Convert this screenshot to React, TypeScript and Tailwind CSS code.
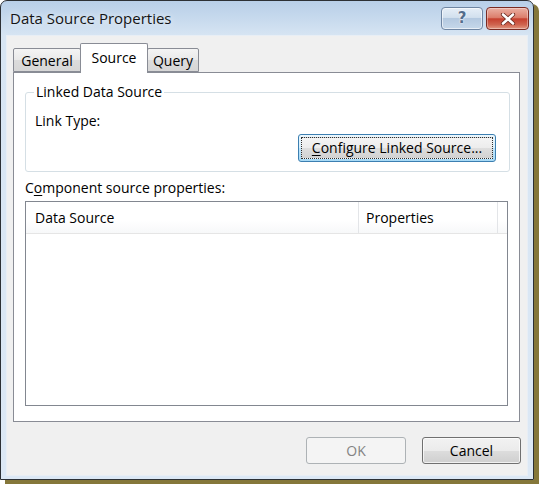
import React from "react";

const font = "font-['Open_Sans',_'Noto_Sans',_sans-serif]";

function TitleButtons() {
  return (
    <div className="flex gap-[3px] self-start mt-[6px]">
      <div className="w-[42px] h-[23px] rounded-[4px] border border-[#6f86a3] bg-[linear-gradient(to_bottom,#e6eef7_0%,#d2e0ee_45%,#b4c9e0_50%,#c6d8ea_100%)] flex items-center justify-center shadow-[inset_0_0_0_1px_rgba(255,255,255,0.6)]">
        <span className="text-[15px] leading-none font-bold text-[#536d8c] [text-shadow:0_0_2px_#fff,0_0_1px_#fff] font-['DejaVu_Sans',sans-serif]">?</span>
      </div>
      <div className="w-[43px] h-[23px] rounded-[4px] border border-[#7a2a22] bg-[linear-gradient(to_bottom,#eab0a3_0%,#dc7f6d_45%,#c6402f_52%,#d06550_80%,#e39a84_100%)] flex items-center justify-center shadow-[inset_0_0_0_1px_rgba(255,255,255,0.35)]">
        <svg width="16" height="12" viewBox="0 0 16 12">
          <path d="M3 1.5 L13 10.5 M13 1.5 L3 10.5" stroke="#6b2a20" strokeWidth="4.2" strokeLinecap="round" />
          <path d="M3 1.5 L13 10.5 M13 1.5 L3 10.5" stroke="#ffffff" strokeWidth="2.6" strokeLinecap="round" />
        </svg>
      </div>
    </div>
  );
}

function Tab({ label, selected, w }: { label: string; selected?: boolean; w: string }) {
  if (selected) {
    return (
      <div
        className={`${w} h-[30px] -mb-px relative z-10 bg-white border border-b-0 border-[#898c95] rounded-t-[2px] flex items-center justify-center text-[14px] text-black pb-[2px]`}
      >
        {label}
      </div>
    );
  }
  return (
    <div
      className={`${w} h-[24px] bg-[linear-gradient(to_bottom,#f4f4f4_0%,#e9e9e9_50%,#dcdcdc_51%,#d6d6d6_100%)] border border-[#898c95] rounded-t-[2px] flex items-center justify-center text-[14px] text-black`}
    >
      {label}
    </div>
  );
}

export default function App() {
  return (
    <div className={`w-[539px] h-[484px] bg-white ${font}`}>
      <div className="w-[534px] h-[480px] flex flex-col border border-[#2c3035] rounded-t-[7px] bg-[linear-gradient(to_bottom,#b8cfe8_0px,#c9dbee_20px,#d7e5f3_35px,#dce8f5_100%)] shadow-[5px_4px_0_0_#85773a]">
        {/* Title bar */}
        <div className="h-[35px] flex items-start pl-[9px] pr-[4px]">
          <div className="text-[15px] leading-[20px] mt-[7px] text-[#141414] [text-shadow:0_0_6px_rgba(255,255,255,0.9)]">
            Data Source Properties
          </div>
          <div className="flex-1" />
          <TitleButtons />
        </div>

        {/* Client */}
        <div className="flex-1 mx-[6px] mb-[4px] bg-[#f0f0f0] flex flex-col pl-[6px] pr-[6px] pt-[7px] shadow-[0_0_0_1px_#e8eef5]">
          {/* Tabs */}
          <div className="h-[29px] flex items-end">
            <Tab label="General" w="w-[68px]" />
            <Tab label="Source" selected w="w-[68px] -ml-px" />
            <Tab label="Query" w="w-[52px] -ml-px" />
          </div>

          {/* Panel */}
          <div className="w-[507px] h-[350px] bg-white border border-[#898c95] pl-[11px] pt-[9px] flex flex-col">
            <fieldset className="w-[485px] h-[90px] border border-[#d5dfe5] rounded-[3px] pl-[8px] pr-[13px] flex flex-col">
              <legend className="px-[2px] text-[14px] leading-[20px] text-black">Linked Data Source</legend>
              <div className="pl-[1px] text-[14px] leading-[20px] mt-[9px] text-black">Link Type:</div>
              <div className="flex justify-end mt-[3px]">
                <div className="w-[198px] h-[28px] rounded-[3px] border border-[#3c7fb1] bg-[linear-gradient(to_bottom,#eaf6fd_0%,#d9f0fc_50%,#bee6fd_51%,#a7d9f5_100%)] p-[2px]">
                  <div className="w-full h-full border border-dotted border-[#303030] bg-[linear-gradient(to_bottom,#f4f4f4_0%,#ececec_50%,#dedede_51%,#d2d2d2_100%)] flex items-center justify-center text-[14px] text-black leading-none">
                    <span>
                      <span className="underline underline-offset-2">C</span>onfigure Linked Source...
                    </span>
                  </div>
                </div>
              </div>
            </fieldset>

            <div className="text-[14px] leading-[20px] mt-[6px] text-black">
              C<span className="underline underline-offset-2">o</span>mponent source properties:
            </div>

            <div className="w-[483px] h-[205px] mt-[3px] border border-[#828790] bg-white flex flex-col">
              <div className="h-[32px] flex border-b border-[#e5e5e5] bg-[linear-gradient(to_bottom,#ffffff_0%,#ffffff_60%,#f7f8f9_100%)] text-[14px] text-black">
                <div className="w-[333px] flex items-center pl-[9px] border-r border-[#e3e5e8]">Data Source</div>
                <div className="w-[139px] flex items-center pl-[7px] border-r border-[#e3e5e8]">Properties</div>
                <div className="flex-1" />
              </div>
            </div>
          </div>

          {/* Buttons */}
          <div className="flex justify-end gap-[16px] mt-[15px]">
            <div className="w-[100px] h-[27px] rounded-[3px] border border-[#adb2b5] bg-[#f4f4f4] flex items-center justify-center text-[14px] text-[#838383]">
              OK
            </div>
            <div className="w-[99px] h-[27px] rounded-[3px] border border-[#707070] bg-[linear-gradient(to_bottom,#f2f2f2_0%,#ebebeb_50%,#dddddd_51%,#cfcfcf_100%)] shadow-[inset_0_0_0_1px_rgba(255,255,255,0.7)] flex items-center justify-center text-[14px] text-black">
              Cancel
            </div>
          </div>
        </div>
      </div>
    </div>
  );
}
